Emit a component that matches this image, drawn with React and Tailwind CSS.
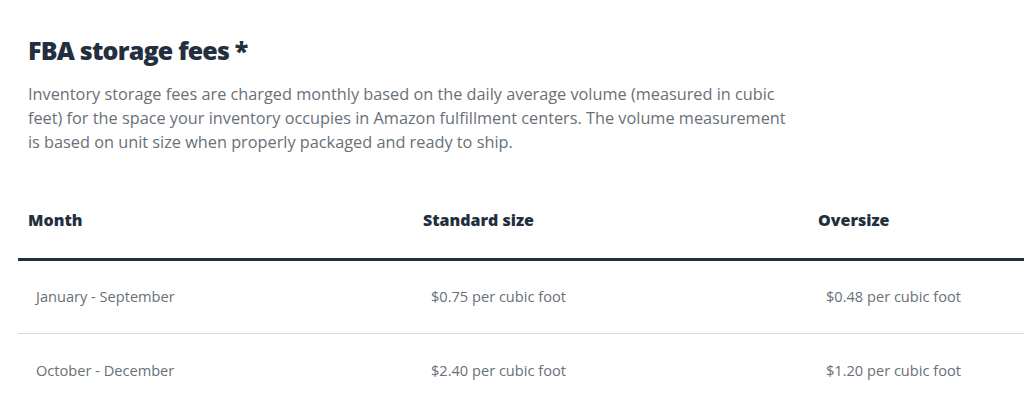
export default function App() {
  const rows = [
    { month: "January - September", standard: "$0.75 per cubic foot", oversize: "$0.48 per cubic foot" },
    { month: "October - December", standard: "$2.40 per cubic foot", oversize: "$1.20 per cubic foot" },
  ];

  return (
    <div className="w-[1024px] h-[414px] overflow-hidden bg-white font-['Open_Sans',sans-serif]">
      <div className="pt-[32px] pl-[28px]">
        {/* TITLE */}
        <h1 className="text-[25px] leading-[36px] font-extrabold tracking-[-0.8px] text-[#232f3e]">
          FBA storage fees *
        </h1>
        <p className="mt-[14px] w-[770px] text-[16.3px] leading-[24px] text-[#687078]">
          Inventory storage fees are charged monthly based on the daily average volume (measured in cubic
          feet) for the space your inventory occupies in Amazon fulfillment centers. The volume measurement
          is based on unit size when properly packaged and ready to ship.
        </p>
      </div>

      {/* TABLE */}
      <div className="ml-[18px] mt-[27px] w-[1185px]">
        <div className="grid grid-cols-3 border-b-[3px] border-[#232f3e] h-[80px] items-center">
          <div className="pl-[10px] text-[16px] font-extrabold text-[#232f3e]">Month</div>
          <div className="pl-[10px] text-[16px] font-extrabold text-[#232f3e]">Standard size</div>
          <div className="pl-[10px] text-[16px] font-extrabold text-[#232f3e]">Oversize</div>
        </div>
        {rows.map((row, i) => (
          <div
            key={i}
            className={
              i < rows.length - 1
                ? "grid grid-cols-3 h-[73px] items-center border-b border-[#d5dbdb] text-[14.6px] text-[#687078]"
                : "grid grid-cols-3 h-[73px] items-center text-[14.6px] text-[#687078]"
            }
          >
            <div className="pl-[18px]">{row.month}</div>
            <div className="pl-[18px]">{row.standard}</div>
            <div className="pl-[18px]">{row.oversize}</div>
          </div>
        ))}
      </div>
    </div>
  );
}
